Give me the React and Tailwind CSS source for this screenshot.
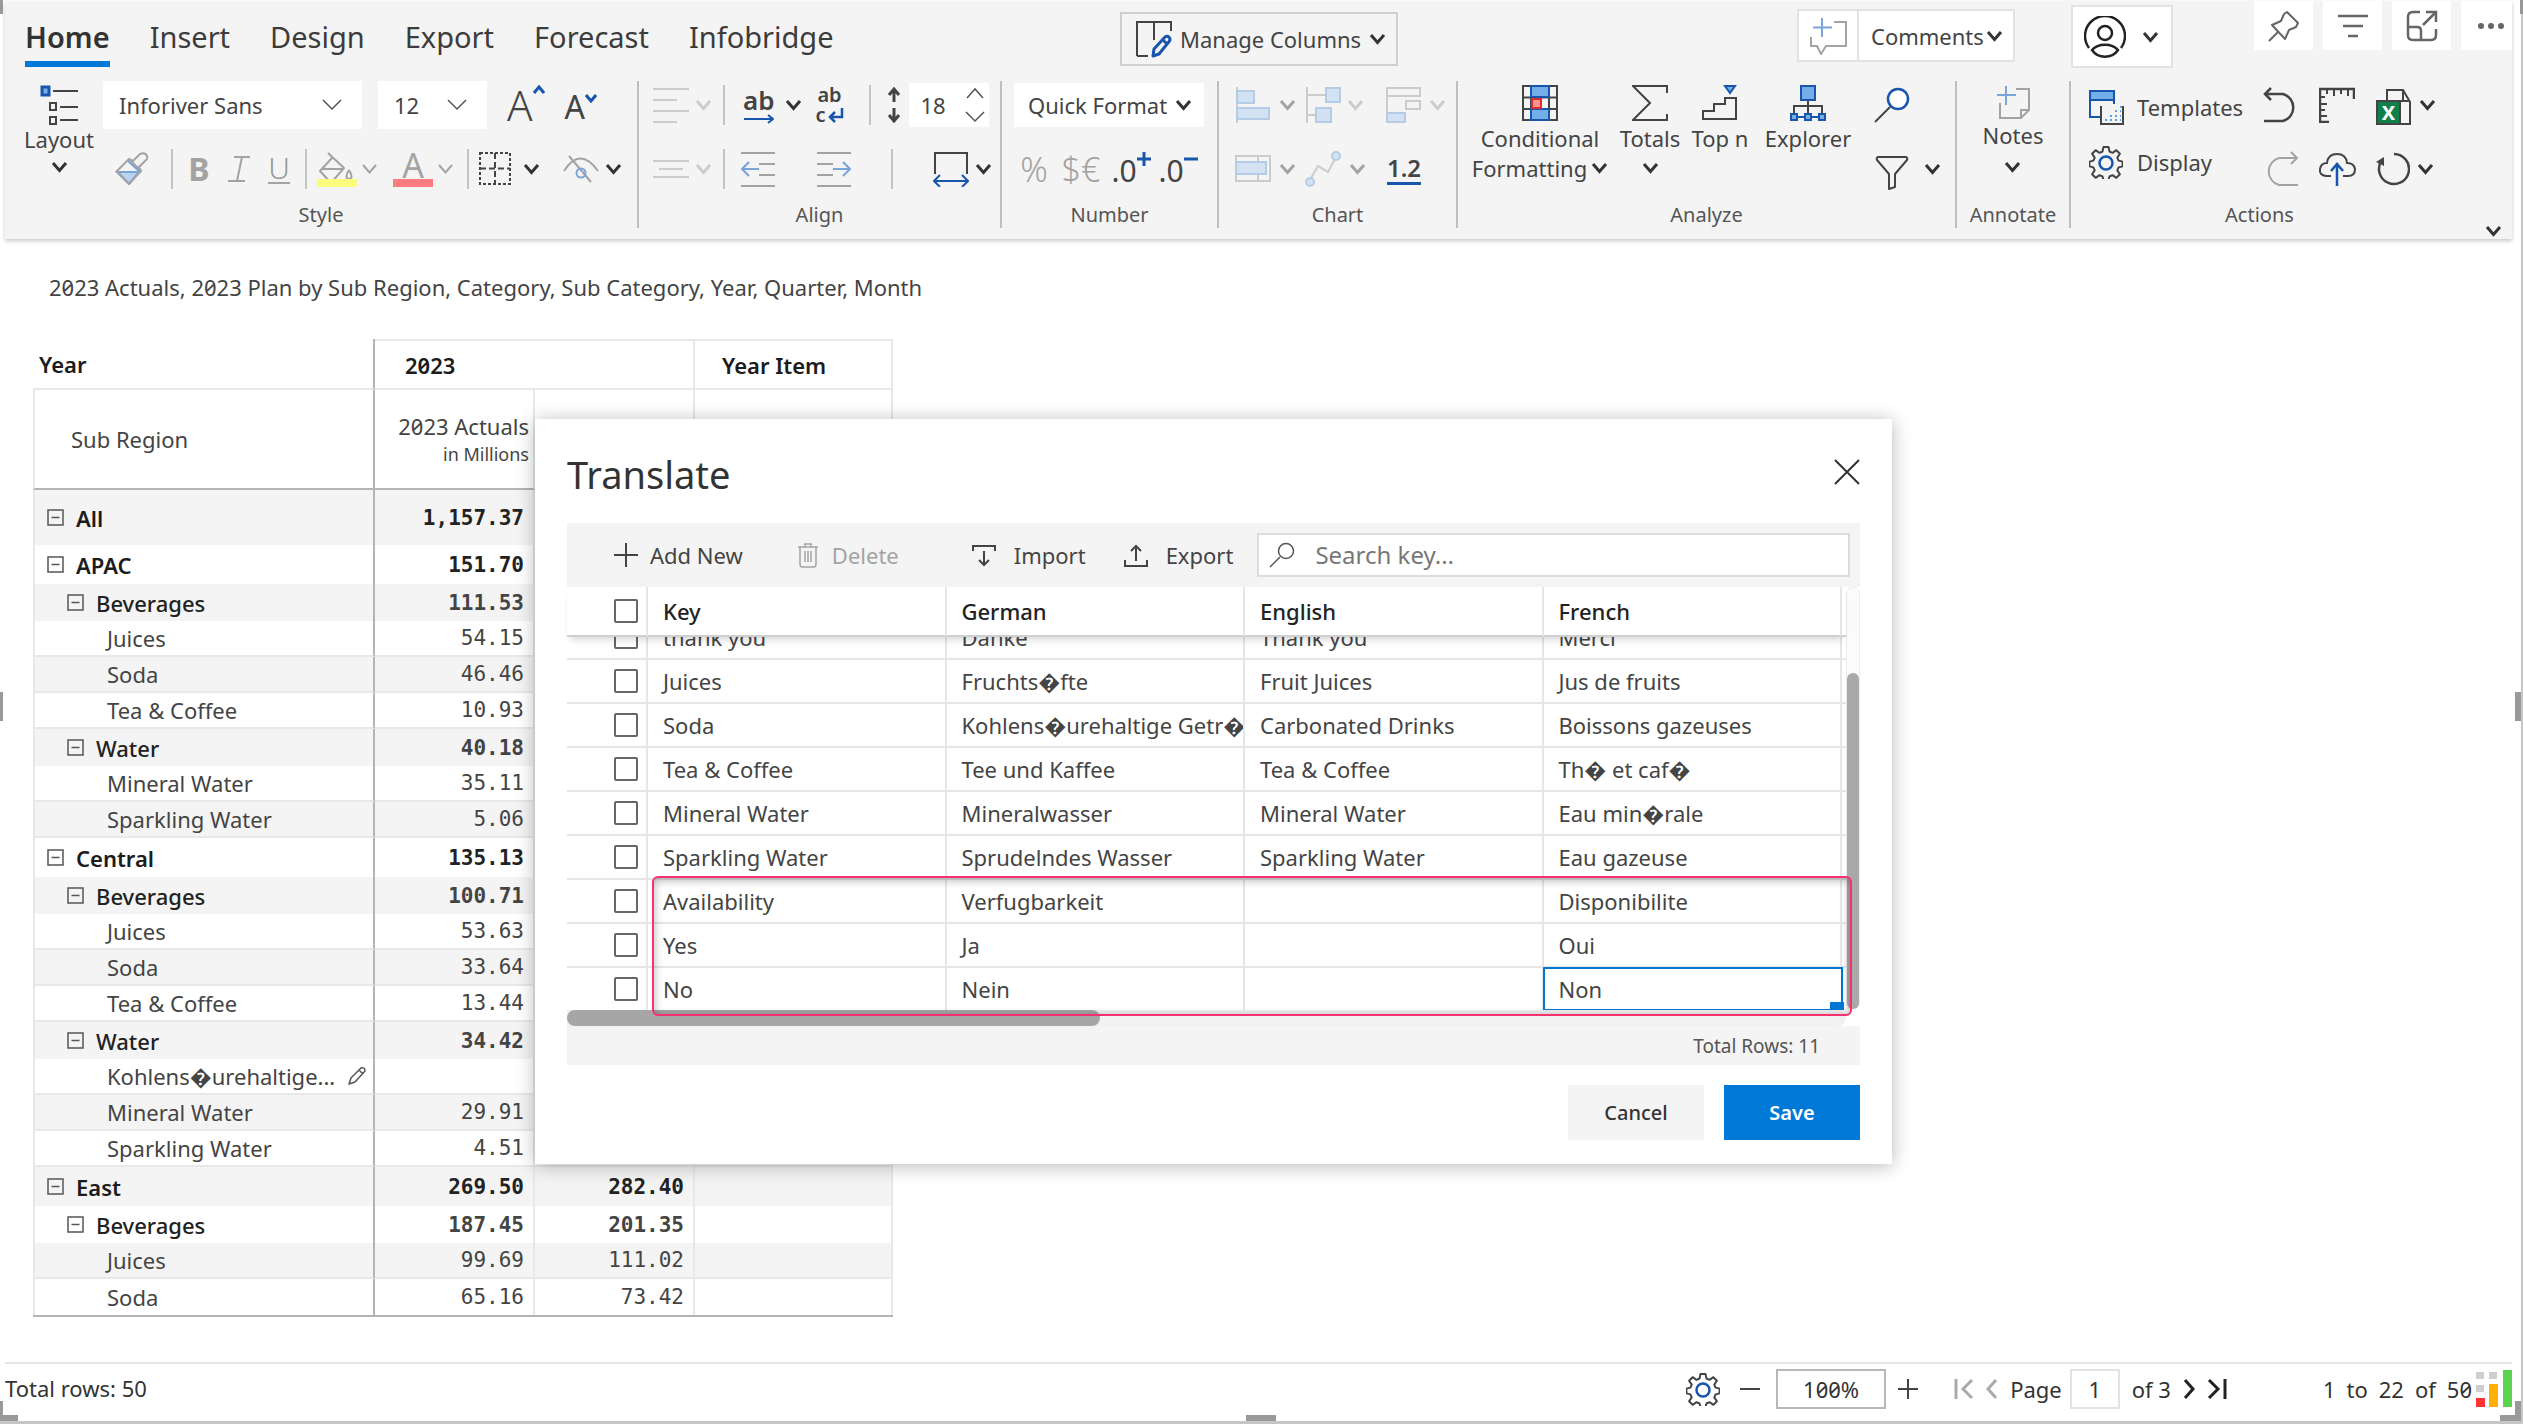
import React from "react";

const DARK = "#444444";
const BLUE = "#1856ad";
const SOFT = "#7ba4d9";
const GREY = "#a3a3a3";
const FAINT = "#cccccc";

/* ---------- shared pieces ---------- */

function Icon({ w = 36, h = 36, color = DARK, sw = 2, children }) {
  return (
    <svg width={w} height={h} viewBox={`0 0 ${w} ${h}`} fill="none" stroke={color} strokeWidth={sw} aria-hidden="true" className="shrink-0">
      {children}
    </svg>
  );
}

function Chevron({ color = "#333333", sw = 3 }) {
  return (
    <Icon w={17} h={12} color={color} sw={sw}>
      <path d="M2 2 L8.500 9.500 L15 2" />
    </Icon>
  );
}

function ThinChevron({ up = false }) {
  return (
    <Icon w={20} h={12} color="#555555" sw={1.500}>
      <path d={up ? "M2 11 L10 2 L18 11" : "M1 1 L10 10 L19 1"} />
    </Icon>
  );
}

function Tool({ label, className = "", children, disabled = false }) {
  return (
    <button type="button" aria-label={label} disabled={disabled} className={`flex h-full shrink-0 items-center justify-center ${className}`}>
      {children}
    </button>
  );
}

function Sep({ className = "" }) {
  return <span className={`h-10 w-0.5 shrink-0 bg-[#c4c4c4] ${className}`} />;
}

function Group({ label, children, last = false, className = "", labelClass = "" }) {
  return (
    <section aria-label={label} className={`flex h-[147px] min-w-0 flex-col ${last ? "" : "border-r-2 border-[#c0c0c0]"}`}>
      <div className={`flex h-[118px] shrink-0 ${className}`}>{children}</div>
      <h2 className={`shrink-0 text-center text-[20px] leading-8 text-[#555] ${labelClass}`}>{label}</h2>
    </section>
  );
}

function Rows({ top, bottom }) {
  return (
    <div className="flex flex-col gap-5">
      <div className="flex h-12 items-center">{top}</div>
      <div className="flex h-10 items-center">{bottom}</div>
    </div>
  );
}

function GearIcon() {
  return (
    <Icon w={34} h={34}>
      <path
        strokeLinejoin="round"
        d="M14.500 2 h5 l1 4.500 3 1.300 3.900-2.600 3.500 3.500 -2.600 3.900 1.300 3 4 1 v4.800 l-4 1 -1.300 3 2.600 3.900 -3.500 3.500 -3.900-2.600 -3 1.300 -1 3.500 h-5 l-1-3.500 -3-1.300 -3.900 2.600 -3.500-3.500 2.600-3.900 -1.300-3 -4-1 v-4.800 l4-1 1.300-3 -2.600-3.900 3.500-3.500 3.900 2.600 3-1.300 z"
      />
      <circle cx="17" cy="18" r="6.500" stroke={BLUE} strokeWidth="2.500" />
    </Icon>
  );
}

/* ---------- top bar ---------- */

const TABS = ["Home", "Insert", "Design", "Export", "Forecast", "Infobridge"];

function TopBar() {
  return (
    <div className="grid h-20 grid-cols-[1115fr_677fr_715fr] items-start">
      <nav className="flex gap-10 pt-4 pl-5">
        {TABS.map((t, i) => (
          <a
            key={t}
            href="#"
            className={
              i === 0
                ? "border-b-6 border-[#0078d7] pb-1 text-[29px] leading-10 font-semibold text-[#333]"
                : "text-[29px] leading-10 text-[#3c3c3c]"
            }
          >
            {t}
          </a>
        ))}
      </nav>
      <div className="flex pt-[11px]">
        <button type="button" className="flex h-[54px] items-center gap-2 border-2 border-[#cfcfcf] pr-2.5 pl-3.5">
          <Icon w={36} h={38}>
            <path d="M1 36 V2 H35 V11 M18 2 V20 M1 36 H12" />
            <path stroke={BLUE} strokeWidth="3" strokeLinejoin="round" d="M17 36 L18 29 L29 17 C32 15 35 18 33.500 21 L23 34 Z M27 20 L31 24" />
          </Icon>
          <span>Manage Columns</span>
          <Chevron />
        </button>
      </div>
      <div className="flex">
        <div className="mt-2 flex h-[53px] border-2 border-[#e2e2e2] bg-white">
          <button type="button" aria-label="Add comment" className="flex w-[60px] items-center justify-center border-r-2 border-[#e2e2e2]">
            <Icon w={38} h={38} color={GREY}>
              <path d="M25 5 H37 V29 H17 L12 37 L8 29 H2 V20" />
              <path stroke={SOFT} d="M13 1 V20 M4 10.500 H23" />
            </Icon>
          </button>
          <button type="button" className="flex items-center gap-0.5 pr-2.5 pl-3">
            Comments
            <Chevron />
          </button>
        </div>
        <button type="button" aria-label="Account" className="mt-1 ml-14 flex h-[63px] w-[102px] items-center justify-center gap-4 border-2 border-[#e2e2e2] bg-white">
          <Icon w={42} h={42} color="#222222">
            <path d="M5 32 A20 20 0 1 1 37 32" strokeWidth="2.500" />
            <circle cx="21" cy="17" r="7" strokeWidth="2.500" />
            <path strokeWidth="2.500" d="M8 34 C14 27 28 27 34 34 C28 43 14 43 8 34 Z" />
          </Icon>
          <Chevron />
        </button>
        <div className="ml-auto flex h-[49px] gap-2.5">
          <Tool label="Pin" className="w-[59px] bg-white">
            <Icon w={32} h={32} color="#666666">
              <path strokeLinejoin="round" d="M19 2 L30 13 L28 17 L21 20 L17 29 L4 15 L13 11 L16 4 Z M10 22 L1 31" />
            </Icon>
          </Tool>
          <Tool label="Filters" className="w-[59px] bg-white">
            <Icon w={32} h={26} color="#666666" sw={2.500}>
              <path d="M1 3 H31 M6 13 H26 M11 23 H21" />
            </Icon>
          </Tool>
          <Tool label="Focus mode" className="w-[59px] bg-white">
            <Icon w={32} h={32} color="#666666" sw={2.500}>
              <path d="M14 2 H7 Q2 2 2 7 V25 Q2 30 7 30 H25 Q30 30 30 25 V19 M2 17 H11 Q15 17 15 21 V30 M17 15 L30 2 M20 2 H30 V12" />
            </Icon>
          </Tool>
          <Tool label="More options" className="w-[51px] bg-white pl-2">
            <Icon w={28} h={8}>
              <g fill="#666666" stroke="none">
                <circle cx="4" cy="4" r="3" />
                <circle cx="14" cy="4" r="3" />
                <circle cx="24" cy="4" r="3" />
              </g>
            </Icon>
          </Tool>
        </div>
      </div>
    </div>
  );
}

/* ---------- ribbon ---------- */

function SelectBox({ label, value, className }) {
  return (
    <div className={`grid h-12 shrink-0 items-center bg-white ${className}`}>
      <select aria-label={label} className="col-start-1 row-start-1 h-full w-full appearance-none bg-transparent px-4">
        <option>{value}</option>
      </select>
      <span className="pointer-events-none col-start-1 row-start-1 justify-self-end pr-5">
        <ThinChevron />
      </span>
    </div>
  );
}

function StyleGroup() {
  return (
    <Group label="Style" className="pl-4">
      <button type="button" className="mr-1.5 flex w-[76px] flex-col items-center pt-1">
        <Icon w={38} h={40}>
          <rect x="2" y="2" width="7" height="8" fill="#73aee8" stroke={BLUE} strokeWidth="3" />
          <path d="M13 6 H38 M20 22 H38 M20 35 H38" />
          <rect x="10" y="18" width="6" height="7" />
          <rect x="10" y="32" width="6" height="7" />
        </Icon>
        <span className="leading-7">Layout</span>
        <span className="pt-2">
          <Chevron />
        </span>
      </button>
      <Rows
        top={
          <>
            <SelectBox label="Font family" value="Inforiver Sans" className="w-[259px]" />
            <SelectBox label="Font size" value="12" className="ml-4 w-[109px]" />
            <Tool label="Increase font size" className="ml-5">
              <span className="text-[42px] leading-none font-light text-[#444]">A</span>
              <span className="self-start pt-1">
                <Icon w={12} h={10} color={BLUE} sw={3}>
                  <path d="M1 8 L6 2 L11 8" />
                </Icon>
              </span>
            </Tool>
            <Tool label="Decrease font size" className="ml-5">
              <span className="pt-1 text-[32px] leading-none text-[#444]">A</span>
              <span className="self-start pt-3">
                <Icon w={12} h={10} color={BLUE} sw={3}>
                  <path d="M1 2 L6 8 L11 2" />
                </Icon>
              </span>
            </Tool>
          </>
        }
        bottom={
          <>
            <Tool label="Format painter" className="w-[58px]">
              <Icon w={34} h={34} color={GREY}>
                <path fill="#b9d4f0" stroke={SOFT} d="M2 20 H24 L14 32 Z" />
                <path strokeLinejoin="round" d="M2 19 L14 7 L18 9 L25 2 Q30 0 32 4 Q33 7 30 9 L24 15 L26 19 L14 32 Z M14 7 L26 19" />
                <path stroke={SOFT} d="M13 9 L25 20" />
              </Icon>
            </Tool>
            <Sep className="mx-2.5" />
            <Tool label="Bold" className="w-8">
              <span className="text-[32px] leading-none font-bold text-[#a3a3a3]">B</span>
            </Tool>
            <Tool label="Italic" className="w-12">
              <Icon w={22} h={28} color={GREY}>
                <path d="M6 2 H22 M0 26 H17 M14 2 L9 26" />
              </Icon>
            </Tool>
            <Tool label="Underline" className="w-8">
              <span className="border-b-2 border-[#a3a3a3] text-[30px] leading-7 font-light text-[#999]">U</span>
            </Tool>
            <Sep className="mx-2.5" />
            <Tool label="Fill colour" className="w-10">
              <Icon w={40} h={36} color={GREY}>
                <path strokeLinejoin="round" d="M11 2 L27 17 L14 32 L3 20 L15 7 M5 18 H27" />
                <path d="M32 19 Q27 27 32 28 Q37 27 32 19" />
                <rect x="0" y="28" width="40" height="8" fill="#fbfb7d" stroke="none" />
              </Icon>
            </Tool>
            <Tool label="Fill colour options" className="w-6">
              <Chevron color={GREY} sw={2} />
            </Tool>
            <Tool label="Font colour" className="ml-3 w-10 flex-col">
              <span className="text-[34px] leading-7 text-[#a3a3a3]">A</span>
              <span className="h-2 w-10 bg-[#fb7d82]" />
            </Tool>
            <Tool label="Font colour options" className="w-6">
              <Chevron color={GREY} sw={2} />
            </Tool>
            <Sep className="mx-2.5" />
            <Tool label="Borders">
              <Icon w={32} h={34}>
                <rect x="1" y="1" width="30" height="31" strokeDasharray="3 2" />
                <path d="M16 1 V32 M1 16.500 H31" strokeDasharray="6 3" />
              </Icon>
            </Tool>
            <Tool label="Border options" className="w-10">
              <Chevron />
            </Tool>
            <Tool label="Hide" className="ml-3">
              <Icon w={36} h={30} color={GREY}>
                <path d="M1 17 Q17 -8 35 17 M6 2 L28 28" />
                <circle cx="18" cy="19" r="4.500" stroke={SOFT} />
              </Icon>
            </Tool>
            <Tool label="Hide options" className="w-7">
              <Chevron />
            </Tool>
          </>
        }
      />
    </Group>
  );
}

function AlignGroup() {
  return (
    <Group label="Align" className="pl-3.5">
      <Rows
        top={
          <>
            <Tool label="Vertical align" disabled>
              <Icon w={36} h={36} color={FAINT}>
                <path d="M0 2 H36 M0 13 H24 M0 24 H36 M0 35 H24" />
              </Icon>
            </Tool>
            <Tool label="Vertical align options" className="w-7" disabled>
              <Chevron color={FAINT} />
            </Tool>
            <Sep className="ml-1.5" />
            <Tool label="Text overflow" className="ml-[18px] flex-col">
              <span className="text-[26px] leading-7 font-semibold text-[#444]">ab</span>
              <Icon w={30} h={10} color={BLUE}>
                <path d="M0 5 H29 M24 1 L29 5 L24 9" />
              </Icon>
            </Tool>
            <Tool label="Text overflow options" className="w-[38px]">
              <Chevron />
            </Tool>
            <Tool label="Wrap text" className="w-[34px] flex-col">
              <span className="text-[20px] leading-5 font-semibold text-[#444]">ab</span>
              <span className="flex items-center gap-0.5 text-[20px] leading-5 font-semibold text-[#444]">
                c
                <Icon w={16} h={16} color={BLUE} sw={2.500}>
                  <path d="M14 1 V10 H3 M7 5 L2 10 L7 15" />
                </Icon>
              </span>
            </Tool>
            <Sep className="ml-[22px]" />
            <Tool label="Row height" className="ml-2 w-[30px]">
              <Icon w={14} h={36} sw={3}>
                <path d="M7 2 V15 M2 8 L7 2 L12 8 M7 21 V34 M2 28 L7 34 L12 28" />
              </Icon>
            </Tool>
            <div className="flex h-11 w-20 items-center justify-between bg-white pr-1 pl-3">
              <input aria-label="Row height value" defaultValue="18" className="w-8 bg-transparent" />
              <span className="flex flex-col gap-3">
                <button type="button" aria-label="Increase">
                  <ThinChevron up />
                </button>
                <button type="button" aria-label="Decrease">
                  <ThinChevron />
                </button>
              </span>
            </div>
          </>
        }
        bottom={
          <>
            <Tool label="Horizontal align" disabled>
              <Icon w={36} h={20} color={FAINT}>
                <path d="M0 2 H36 M6 10 H30 M0 18 H36" />
              </Icon>
            </Tool>
            <Tool label="Horizontal align options" className="w-7" disabled>
              <Chevron color={FAINT} />
            </Tool>
            <Sep className="ml-1.5" />
            <Tool label="Decrease indent" className="ml-4">
              <Icon w={34} h={36} color={GREY}>
                <path d="M0 2 H34 M18 13 H34 M18 24 H34 M0 35 H34" />
                <path stroke={SOFT} d="M1 18 H18 M8 11 L1 18 L8 25" />
              </Icon>
            </Tool>
            <Tool label="Increase indent" className="ml-[42px]">
              <Icon w={34} h={36} color={GREY}>
                <path d="M0 2 H34 M0 13 H16 M0 24 H16 M0 35 H34" />
                <path stroke={SOFT} d="M16 18 H33 M26 11 L33 18 L26 25" />
              </Icon>
            </Tool>
            <Sep className="ml-10" />
            <Tool label="Column width" className="ml-10">
              <Icon w={36} h={36}>
                <path d="M2 23 V2 H34 V23" />
                <path stroke={BLUE} d="M1 30 H35 M7 24 L1 30 L7 36 M29 24 L35 30 L29 36" />
              </Icon>
            </Tool>
            <Tool label="Column width options" className="w-7">
              <Chevron />
            </Tool>
          </>
        }
      />
    </Group>
  );
}

function NumberGroup() {
  return (
    <Group label="Number" className="pl-3">
      <Rows
        top={
          <div className="grid h-11 w-[190px] items-center bg-white">
            <select aria-label="Number format" className="col-start-1 row-start-1 h-full w-full appearance-none bg-transparent pl-3.5">
              <option>Quick Format</option>
            </select>
            <span className="pointer-events-none col-start-1 row-start-1 justify-self-end pr-3">
              <Chevron />
            </span>
          </div>
        }
        bottom={
          <>
            <Tool label="Percent" className="w-10">
              <span className="text-[34px] leading-none font-light text-[#a3a3a3]">%</span>
            </Tool>
            <Tool label="Currency" className="w-[54px]">
              <span className="text-[34px] leading-none font-light text-[#a3a3a3]">$€</span>
            </Tool>
            <Tool label="Increase decimals" className="w-[46px]">
              <span className="pt-1 text-[30px] leading-none text-[#444]">.0</span>
              <span className="self-start">
                <Icon w={14} h={20} color={BLUE} sw={3}>
                  <path d="M0 10 H14 M7 3 V17" />
                </Icon>
              </span>
            </Tool>
            <Tool label="Decrease decimals" className="w-12">
              <span className="pt-1 text-[30px] leading-none text-[#444]">.0</span>
              <span className="self-start">
                <Icon w={14} h={20} color={BLUE} sw={3}>
                  <path d="M0 10 H14" />
                </Icon>
              </span>
            </Tool>
          </>
        }
      />
    </Group>
  );
}

function ChartGroup() {
  const light = { fill: "#d3e2f2", stroke: "#b5cce6" };
  return (
    <Group label="Chart" className="pl-4">
      <Rows
        top={
          <>
            <Tool label="Bar chart" disabled>
              <Icon w={36} h={36} color={FAINT}>
                <path d="M2 0 V36" />
                <rect x="2" y="4" width="17" height="12" {...light} />
                <rect x="2" y="21" width="32" height="11" {...light} />
              </Icon>
            </Tool>
            <Tool label="Bar chart options" className="w-8" disabled>
              <Chevron color={GREY} />
            </Tool>
            <Tool label="Waterfall chart" className="ml-0.5" disabled>
              <Icon w={36} h={36} color={FAINT}>
                <path d="M2 0 V36 M2 8 H20 M2 28 H12" />
                <rect x="21" y="1" width="14" height="14" {...light} />
                <rect x="11" y="21" width="15" height="14" {...light} />
              </Icon>
            </Tool>
            <Tool label="Waterfall chart options" className="w-7" disabled>
              <Chevron color={FAINT} />
            </Tool>
            <Tool label="Stacked chart" className="ml-4" disabled>
              <Icon w={36} h={36} color={FAINT}>
                <path d="M2 0 V36 M2 1 H35 V9 H2" />
                <rect x="21" y="14" width="14" height="8" />
                <rect x="2" y="26" width="18" height="9" {...light} />
              </Icon>
            </Tool>
            <Tool label="Stacked chart options" className="w-8" disabled>
              <Chevron color={FAINT} />
            </Tool>
          </>
        }
        bottom={
          <>
            <Tool label="Bullet chart" disabled>
              <Icon w={36} h={28} color={FAINT}>
                <path d="M1 1 H35 V26 H1 Z M23 1 V26" />
                <rect x="1" y="7" width="30" height="12" {...light} />
              </Icon>
            </Tool>
            <Tool label="Bullet chart options" className="w-8" disabled>
              <Chevron color={GREY} />
            </Tool>
            <Tool label="Line chart" className="ml-0.5" disabled>
              <Icon w={36} h={36} color={FAINT}>
                <path d="M6 27 L13 15 L23 21 L31 6" />
                <circle cx="5" cy="31" r="4" {...light} />
                <circle cx="31" cy="5" r="4" {...light} />
              </Icon>
            </Tool>
            <Tool label="Line chart options" className="w-8" disabled>
              <Chevron color={GREY} />
            </Tool>
            <Tool label="Number display" className="ml-3.5">
              <span className="border-b-3 border-[#1856ad] text-[24px] leading-7 font-semibold text-[#444]">1.2</span>
            </Tool>
          </>
        }
      />
    </Group>
  );
}

function BigButton({ label, second, className, icon, arrow = false }) {
  return (
    <button type="button" className={`flex shrink-0 flex-col items-center pt-1 leading-[30px] ${className}`}>
      {icon}
      <span className="pt-0.5 whitespace-nowrap">{label}</span>
      {arrow && (
        <span className="flex h-[30px] items-center gap-1">
          {second}
          <Chevron />
        </span>
      )}
    </button>
  );
}

function AnalyzeGroup() {
  const node = { fill: "#73aee8", stroke: BLUE };
  return (
    <Group label="Analyze" className="pl-3.5">
      <BigButton
        label="Conditional"
        second="Formatting"
        arrow
        className="w-[136px]"
        icon={
          <Icon>
            <path d="M1 1 H35 V35 H1 Z M1 12.500 H35 M1 24 H35 M9 1 V35 M27 1 V35" />
            <rect x="9" y="1" width="18" height="11" {...node} />
            <rect x="9" y="24" width="18" height="11" {...node} />
            <rect x="10" y="14" width="9" height="9" fill="#ff9090" stroke="#e02b2b" />
          </Icon>
        }
      />
      <BigButton
        label="Totals"
        arrow
        className="ml-2.5 w-16"
        icon={
          <Icon>
            <path d="M35 8 V1 H1 L18 18 L1 35 H35 V29" />
          </Icon>
        }
      />
      <BigButton
        label="Top n"
        className="ml-2 w-[60px]"
        icon={
          <Icon>
            <path d="M1 34 V26 H12 V19 H23 V13 H34 V34 Z" />
            <path d="M23 1 H33 L28 8 Z" {...node} />
          </Icon>
        }
      />
      <BigButton
        label="Explorer"
        className="ml-3 w-[92px]"
        icon={
          <Icon>
            <path d="M18 15 V28 M4 28 V21 H32 V28" />
            <path stroke={BLUE} d="M4 32 H32" />
            <rect x="11" y="1" width="14" height="14" {...node} />
            <rect x="1" y="29" width="6" height="6" {...node} />
            <rect x="15" y="29" width="6" height="6" {...node} />
            <rect x="29" y="29" width="6" height="6" {...node} />
          </Icon>
        }
      />
      <div className="ml-4">
        <Rows
          top={
            <Tool label="Search" className="w-11">
              <Icon>
                <path d="M1 35 L16 20" />
                <circle cx="24" cy="12" r="10" stroke={BLUE} strokeWidth="2.500" fill="white" />
              </Icon>
            </Tool>
          }
          bottom={
            <>
              <Tool label="Filter" className="w-11 pt-2">
                <Icon w={34} h={34}>
                  <path strokeLinejoin="round" d="M3 1 H31 Q33 2 32 4 L20 18 V31 L14 33 V18 L2 4 Q1 2 3 1 Z" />
                </Icon>
              </Tool>
              <Tool label="Filter options" className="w-9">
                <Chevron />
              </Tool>
            </>
          }
        />
      </div>
    </Group>
  );
}

function ActionsGroup() {
  return (
    <Group label="Actions" last className="pl-[18px]" labelClass="pr-16">
      <div className="flex w-[168px] flex-col gap-1">
        <button type="button" className="flex h-[52px] items-center gap-3">
          <Icon w={36} h={36}>
            <rect x="1" y="2" width="24" height="9" fill="#73aee8" stroke={BLUE} />
            <path stroke={BLUE} d="M1 11 V28 H11 M25 11 V15" />
            <path d="M12 17 V35 H34 V17" />
            <path stroke="#5b9fe0" strokeDasharray="2 3" d="M16 31 H32 M21 27 H32 M26 22 H32 M31 18 H33" />
          </Icon>
          Templates
        </button>
        <button type="button" className="flex h-[50px] items-center gap-3.5">
          <GearIcon />
          Display
        </button>
      </div>
      <Rows
        top={
          <>
            <Tool label="Undo" className="w-12">
              <Icon color={DARK} sw={2.500}>
                <path d="M1 34 H20 A14 14 0 0 0 20 7 H2 M8 1 L2 7 L8 13" />
              </Icon>
            </Tool>
            <Tool label="Ruler" className="w-16">
              <Icon>
                <path strokeWidth="2.500" d="M10 35 H1 V2 H35 V12" />
                <path d="M8 2 V7 M15 2 V9 M22 2 V7 M29 2 V9 M1 10 H6 M1 17 H8 M1 23 H6 M1 29 H8" />
              </Icon>
            </Tool>
            <Tool label="Export to Excel" className="w-[50px] pt-1">
              <Icon w={36} h={38}>
                <path d="M11 12 V2 H27 L34 14 V36 H1 V13 H34 M27 2 V13" />
                <rect x="1" y="13" width="23" height="23" fill="#10804a" />
                <text x="12.500" y="32" textAnchor="middle" fill="white" stroke="none" fontSize="20" fontWeight="700">
                  X
                </text>
              </Icon>
            </Tool>
            <Tool label="Excel options" className="w-4">
              <Chevron />
            </Tool>
          </>
        }
        bottom={
          <>
            <Tool label="Redo" className="w-12" disabled>
              <Icon color={GREY}>
                <path d="M35 34 H16 A14 14 0 0 1 16 7 H34 M28 1 L34 7 L28 13" />
              </Icon>
            </Tool>
            <Tool label="Upload" className="w-16">
              <Icon w={38} h={36}>
                <path d="M13 25 H8 Q1 24 2 18 Q3 12 9 12 Q10 3 19 3 Q28 3 29 12 Q36 12 37 18 Q37 25 30 25 H25" />
                <path stroke={BLUE} strokeWidth="2.500" d="M19 35 V14 M13 20 L19 13 L25 20" />
              </Icon>
            </Tool>
            <Tool label="Refresh" className="w-12">
              <Icon w={34} h={36}>
                <path strokeWidth="2.500" d="M18 3 A15 15 0 1 1 6 9" />
                <path d="M0 11 L8 6 L8 15 Z" fill={DARK} stroke="none" />
              </Icon>
            </Tool>
            <Tool label="Refresh options" className="w-4">
              <Chevron />
            </Tool>
          </>
        }
      />
    </Group>
  );
}

function Ribbon() {
  return (
    <header className="relative mr-[11px] ml-[5px] h-[238px] shrink-0 bg-[#f4f4f4] shadow-[0_2px_4px_#00000038]">
      <TopBar />
      <div className="grid grid-cols-[634fr_363fr_217fr_239fr_499fr_114fr_441fr]">
        <StyleGroup />
        <AlignGroup />
        <NumberGroup />
        <ChartGroup />
        <AnalyzeGroup />
        <Group label="Annotate" className="justify-center">
          <button type="button" className="flex flex-col items-center pt-1">
            <Icon w={34} h={34} color={GREY}>
              <path d="M20 4 H33 V25 L25 33 H4 V18 M33 25 H25 V33" />
              <path stroke={SOFT} d="M10 1 V20 M1 10 H20" />
            </Icon>
            <span className="leading-8">Notes</span>
            <span className="pt-2.5">
              <Chevron />
            </span>
          </button>
        </Group>
        <ActionsGroup />
      </div>
      <button type="button" aria-label="Collapse ribbon" className="absolute right-2 bottom-0 p-0.5">
        <Chevron />
      </button>
    </header>
  );
}

/* ---------- matrix ---------- */

const MATRIX = [
  [0, "All", "1,157.37", ""],
  [1, "APAC", "151.70", ""],
  [2, "Beverages", "111.53", ""],
  [3, "Juices", "54.15", ""],
  [3, "Soda", "46.46", ""],
  [3, "Tea & Coffee", "10.93", ""],
  [2, "Water", "40.18", ""],
  [3, "Mineral Water", "35.11", ""],
  [3, "Sparkling Water", "5.06", ""],
  [1, "Central", "135.13", ""],
  [2, "Beverages", "100.71", ""],
  [3, "Juices", "53.63", ""],
  [3, "Soda", "33.64", ""],
  [3, "Tea & Coffee", "13.44", ""],
  [2, "Water", "34.42", ""],
  [3, "Kohlens\uFFFDurehaltige...", "", ""],
  [3, "Mineral Water", "29.91", ""],
  [3, "Sparkling Water", "4.51", ""],
  [1, "East", "269.50", "282.40"],
  [2, "Beverages", "187.45", "201.35"],
  [3, "Juices", "99.69", "111.02"],
  [3, "Soda", "65.16", "73.42"],
];

const ROW_HEIGHT = ["h-[55px]", "h-[39px]", "h-[37px]", "h-[36px]"];
const ROW_INDENT = ["pl-3", "pl-3", "pl-8", "pl-[72px]"];
const LABEL_TEXT = [
  "font-semibold text-[#1c1c1c]",
  "font-semibold text-[#1c1c1c]",
  "font-medium text-[#222]",
  "font-normal text-[#444]",
];
const VALUE_TEXT = [
  "font-bold text-[#222]",
  "font-bold text-[#222]",
  "font-bold text-[#444]",
  "font-normal text-[#444]",
];

function Matrix() {
  return (
    <table className="ml-[33px] w-[860px] table-fixed border-separate border-spacing-0 border-b-2 border-b-[#b4b4b4]">
      <colgroup>
        <col className="w-[342px]" />
        <col className="w-[160px]" />
        <col className="w-[160px]" />
        <col className="w-[198px]" />
      </colgroup>
      <thead className="text-left">
        <tr className="h-[51px]">
          <th className="border-r-2 border-b-2 border-r-[#b4b4b4] border-b-[#e8e8e8] pl-1.5 font-semibold text-[#1c1c1c]">Year</th>
          <th colSpan={2} className="border-t-2 border-r-2 border-b-2 border-[#e8e8e8] pl-[30px] font-semibold text-[#1c1c1c] slashed-zero">
            2023
          </th>
          <th className="border-t-2 border-r-2 border-b-2 border-[#e8e8e8] pl-[27px] font-semibold text-[#1c1c1c]">Year Item</th>
        </tr>
        <tr className="h-[100px]">
          <th className="border-r-2 border-b-2 border-l-2 border-r-[#b4b4b4] border-b-[#b4b4b4] border-l-[#e8e8e8] pl-9 font-normal">Sub Region</th>
          <th className="border-r-2 border-b-2 border-r-[#e8e8e8] border-b-[#b4b4b4] pr-1 text-right font-normal whitespace-nowrap">
            <span className="block leading-[30px] slashed-zero">2023 Actuals</span>
            <span className="block text-[18px] leading-[26px]">in Millions</span>
          </th>
          <th className="border-r-2 border-b-2 border-r-[#e8e8e8] border-b-[#b4b4b4]" />
          <th className="border-r-2 border-b-2 border-r-[#e8e8e8] border-b-[#b4b4b4]" />
        </tr>
      </thead>
      <tbody>
        {MATRIX.map(([level, name, a, b], i) => {
          const line = level === 3 && i < MATRIX.length - 1 ? "border-b-2 border-b-[#e8e8e8]" : "";
          const cell = `border-r-2 border-r-[#e8e8e8] ${line} ${VALUE_TEXT[level]} pr-[9px] text-right font-[DejaVu_Sans_Mono,monospace] text-[21px]`;
          return (
            <tr key={i} className={`${ROW_HEIGHT[level]} leading-[30px] ${i % 2 ? "bg-white" : "bg-[#f4f4f4]"}`}>
              <th scope="row" className={`border-r-2 border-l-2 border-r-[#b4b4b4] border-l-[#e8e8e8] text-left ${LABEL_TEXT[level]} ${line} ${ROW_INDENT[level]}`}>
                <span className="flex items-center gap-3">
                  {level < 3 && (
                    <button type="button" aria-label={`Collapse ${name}`} className="shrink-0">
                      <Icon w={17} h={17} color="#555555" sw={1.500}>
                        <rect x="1" y="1" width="15" height="15" />
                        <path d="M4.500 8.500 H12.500" />
                      </Icon>
                    </button>
                  )}
                  {name}
                  {name.startsWith("Kohlens") && (
                    <button type="button" aria-label="Edit">
                      <Icon w={20} h={20} color="#555555" sw={1.500}>
                        <path strokeLinejoin="round" d="M2 18 L4 12 L14 2 Q18 1 18 5 L8 16 Z M12 4 L16 8" />
                      </Icon>
                    </button>
                  )}
                </span>
              </th>
              <td className={cell}>{a}</td>
              <td className={cell}>{b}</td>
              <td className={cell} />
            </tr>
          );
        })}
      </tbody>
    </table>
  );
}

/* ---------- translate dialog ---------- */

const LANGS = ["Key", "German", "English", "French"];

const TERMS = [
  ["thank you", "Danke", "Thank you", "Merci"],
  ["Juices", "Fruchts\uFFFDfte", "Fruit Juices", "Jus de fruits"],
  ["Soda", "Kohlens\uFFFDurehaltige Getr\uFFFD", "Carbonated Drinks", "Boissons gazeuses"],
  ["Tea & Coffee", "Tee und Kaffee", "Tea & Coffee", "Th\uFFFD et caf\uFFFD"],
  ["Mineral Water", "Mineralwasser", "Mineral Water", "Eau min\uFFFDrale"],
  ["Sparkling Water", "Sprudelndes Wasser", "Sparkling Water", "Eau gazeuse"],
  ["Availability", "Verfugbarkeit", "", "Disponibilite"],
  ["Yes", "Ja", "", "Oui"],
  ["No", "Nein", "", "Non"],
];

function Columns() {
  return (
    <colgroup>
      <col className="w-[81px]" />
      <col />
      <col />
      <col />
      <col />
      <col className="w-1" />
    </colgroup>
  );
}

function Check({ label }) {
  return (
    <input
      type="checkbox"
      aria-label={label}
      className="ml-[47px] block size-6 appearance-none rounded-xs border-2 border-[#666] bg-white checked:bg-[#0078d7]"
    />
  );
}

function TermGrid() {
  return (
    <div className="relative grid grid-cols-[1fr_14px]">
      <div className="min-w-0">
        <table className="relative z-10 w-full table-fixed border-separate border-spacing-0 bg-white shadow-[0_6px_8px_-4px_#00000030]">
          <Columns />
          <thead>
            <tr className="h-[50px]">
              <th className="border-r-2 border-b-2 border-r-[#e6e6e6] border-b-[#cfcfcf]">
                <Check label="Select all" />
              </th>
              {LANGS.map((l) => (
                <th key={l} className="border-r-2 border-b-2 border-r-[#e6e6e6] border-b-[#cfcfcf] pl-[15px] text-left font-medium text-[#222]">
                  {l}
                </th>
              ))}
              <th className="border-b-2 border-b-[#cfcfcf]" />
            </tr>
          </thead>
        </table>
        <div className="flex h-[373px] flex-col justify-end overflow-hidden">
          <table className="w-full table-fixed border-separate border-spacing-0">
            <Columns />
            <tbody>
              {TERMS.map((row, r) => {
                const last = r === TERMS.length - 1;
                const line = last ? "" : "border-b-2 border-b-[#e6e6e6]";
                return (
                  <tr key={row[0]} className={last ? "h-[42px]" : "h-11"}>
                    <td className={`border-r-2 border-r-[#e6e6e6] ${line}`}>
                      <Check label={`Select ${row[0]}`} />
                    </td>
                    {row.map((v, c) => (
                      <td
                        key={c}
                        className={
                          last && c === 3
                            ? "relative border-r-2 border-r-transparent pl-[15px] outline-2 -outline-offset-1 outline-[#0078d7]"
                            : `overflow-hidden border-r-2 border-r-[#e6e6e6] pl-[15px] leading-8 whitespace-nowrap ${line}`
                        }
                      >
                        {v}
                        {last && c === 3 && <span className="absolute -right-1 bottom-0 h-2 w-3.5 bg-[#0078d7]" />}
                      </td>
                    ))}
                    <td className={line} />
                  </tr>
                );
              })}
            </tbody>
          </table>
        </div>
      </div>
      <div className="flex flex-col justify-end rounded-full border border-[#ececec] bg-[#fbfbfb]">
        <div className="h-[336px] rounded-full bg-[#a9a9a9]" />
      </div>
      <div className="h-4 rounded-r-full bg-[#f1f1f1]">
        <div className="h-4 w-[533px] rounded-full bg-[#a6a6a6]" />
      </div>
      <div className="pointer-events-none absolute top-[289px] right-2 bottom-2.5 left-[85px] z-20 rounded-md border-2 border-[#f7306f] shadow-[inset_0_2px_10px_#00000050]" />
    </div>
  );
}

function TranslateDialog() {
  return (
    <div role="dialog" aria-label="Translate" className="absolute top-[419px] left-[535px] z-30 w-[1357px] bg-white px-8 pt-7 pb-6 shadow-[0_2px_18px_#00000048]">
      <div className="flex h-[76px] items-start justify-between">
        <h1 className="text-[38px] leading-[54px] text-[#333]">Translate</h1>
        <button type="button" aria-label="Close" className="pt-3">
          <Icon w={26} h={26} color="#333333">
            <path d="M1 1 L25 25 M25 1 L1 25" />
          </Icon>
        </button>
      </div>
      <div className="flex h-16 items-center bg-[#f4f4f4] pr-2.5 pl-[47px]">
        <button type="button" className="flex items-center gap-3">
          <Icon w={24} h={24}>
            <path d="M12 0 V24 M0 12 H24" />
          </Icon>
          Add New
        </button>
        <button type="button" disabled className="ml-[55px] flex items-center gap-3.5 text-[#a3a3a3]">
          <Icon w={20} h={26} color={GREY} sw={1.500}>
            <path d="M0 5 H20 M7 5 V2 H13 V5 M2 5 V22 Q2 25 4 25 H16 Q18 25 18 22 V5 M7 9 V20 M10 9 V20 M13 9 V20" />
          </Icon>
          Delete
        </button>
        <button type="button" className="ml-[73px] flex items-center gap-[18px]">
          <Icon w={24} h={24}>
            <path d="M1 8 V3 H23 V8 M12 8 V22 M7 17 L12 22 L17 17" />
          </Icon>
          Import
        </button>
        <button type="button" className="ml-[38px] flex items-center gap-[18px]">
          <Icon w={24} h={24}>
            <path d="M1 17 V23 H23 V17 M12 18 V3 M7 8 L12 3 L17 8" />
          </Icon>
          Export
        </button>
        <label className="ml-6 flex h-11 flex-1 items-center gap-5 border-2 border-[#dcdcdc] bg-white px-2.5">
          <Icon w={26} h={26} color="#555555" sw={1.500}>
            <path d="M1 25 L11 15" />
            <circle cx="17" cy="9" r="7.500" />
          </Icon>
          <input aria-label="Search key" placeholder="Search key..." className="min-w-0 flex-1 bg-transparent text-[24px] placeholder:text-[#777]" />
        </label>
      </div>
      <TermGrid />
      <div className="flex h-[39px] items-center justify-end bg-[#f4f4f4] pr-10 text-[19px] text-[#555]">Total Rows: 11</div>
      <div className="flex justify-end gap-5 pt-5">
        <button type="button" className="h-[55px] w-[136px] bg-[#f4f4f4] text-[20px] font-medium text-[#333]">
          Cancel
        </button>
        <button type="button" className="h-[55px] w-[136px] bg-[#0078d7] text-[20px] font-semibold text-white">
          Save
        </button>
      </div>
    </div>
  );
}

/* ---------- footer ---------- */

function Pager({ label, d, color, w }) {
  return (
    <button type="button" aria-label={label}>
      <Icon w={w} h={22} color={color} sw={3}>
        <path d={d} />
      </Icon>
    </button>
  );
}

function Footer() {
  return (
    <footer className="mr-[11px] ml-[5px] flex h-[62px] shrink-0 items-start border-t-2 border-[#e6e6e6] text-[#333]">
      <span className="pt-2 leading-8">Total rows: 50</span>
      <div className="ml-auto flex h-[50px] items-center">
        <button type="button" aria-label="Settings">
          <GearIcon />
        </button>
        <button type="button" aria-label="Zoom out" className="ml-5">
          <Icon w={20} h={20}>
            <path d="M0 10 H20" />
          </Icon>
        </button>
        <input aria-label="Zoom" defaultValue="100%" className="ml-4 h-10 w-[110px] border-2 border-[#b8b8b8] text-center slashed-zero" />
        <button type="button" aria-label="Zoom in" className="ml-3">
          <Icon w={20} h={20}>
            <path d="M0 10 H20 M10 0 V20" />
          </Icon>
        </button>
        <div className="ml-9 flex items-center gap-3">
          <Pager label="First page" w={20} color="#aaaaaa" d="M2 1 V21 M18 2 L9 11 L18 20" />
          <Pager label="Previous page" w={12} color="#aaaaaa" d="M10 2 L2 11 L10 20" />
          <label className="flex items-center gap-2">
            Page
            <input defaultValue="1" className="h-10 w-[50px] border-2 border-[#e2e2e2] text-center" />
          </label>
          <span>of 3</span>
          <Pager label="Next page" w={12} color="#222222" d="M2 2 L10 11 L2 20" />
          <Pager label="Last page" w={20} color="#222222" d="M2 2 L11 11 L2 20 M18 1 V21" />
        </div>
        <span className="ml-24 flex gap-[11px] slashed-zero">
          <span>1</span> <span>to</span> <span>22</span> <span>of</span> <span>50</span>
        </span>
        <svg width="36" height="38" viewBox="0 0 36 38" aria-label="Inforiver" className="ml-1">
          <g fill="#cfcfcf">
            <rect x="0" y="2" width="8" height="7" />
            <rect x="13" y="2" width="8" height="7" />
            <rect x="0" y="15" width="8" height="7" />
          </g>
          <rect x="0" y="28" width="9" height="9" fill="#ff3333" />
          <rect x="13" y="14" width="9" height="23" fill="#ffb000" />
          <rect x="27" y="0" width="9" height="37" fill="#5bd34f" />
        </svg>
      </div>
    </footer>
  );
}

/* ---------- selection handles around the visual ---------- */

function Handles() {
  return (
    <div className="pointer-events-none absolute inset-0 border-r-2 border-b-3 border-[#c6c6c6]">
      <span className="absolute top-0 left-0 h-3.5 w-[3px] bg-[#999]" />
      <span className="absolute top-0 -right-0.5 h-3.5 w-[3px] bg-[#999]" />
      <span className="absolute top-[692px] left-0 h-[29px] w-[3px] bg-[#999]" />
      <span className="absolute top-[692px] right-0 h-[29px] w-1.5 bg-[#999]" />
      <span className="absolute bottom-0 left-0 h-5 w-[3px] bg-[#999]" />
      <span className="absolute bottom-0 left-0 h-1.5 w-[18px] bg-[#999]" />
      <span className="absolute bottom-0 left-1/2 h-1.5 w-[30px] -translate-x-1/2 bg-[#999]" />
      <span className="absolute right-0 bottom-0 h-5 w-1.5 bg-[#999]" />
      <span className="absolute right-0 bottom-0 h-1.5 w-[21px] bg-[#999]" />
    </div>
  );
}

export default function App() {
  return (
    <div className="relative flex min-h-screen flex-col bg-white pt-px font-['Noto_Sans',sans-serif] text-[22px] leading-8 text-[#444]">
      <Ribbon />
      <main className="flex-1">
        <p className="pt-8 pb-9 pl-[49px] slashed-zero">2023 Actuals, 2023 Plan by Sub Region, Category, Sub Category, Year, Quarter, Month</p>
        <Matrix />
      </main>
      <Footer />
      <TranslateDialog />
      <Handles />
    </div>
  );
}
